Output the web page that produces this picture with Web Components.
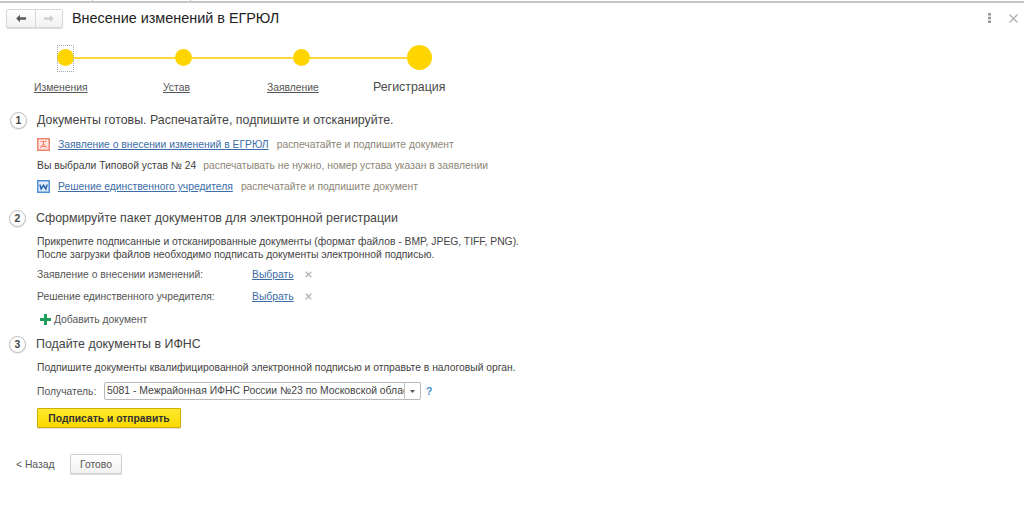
<!DOCTYPE html>
<html lang="ru">
<head>
<meta charset="utf-8">
<title>Внесение изменений в ЕГРЮЛ</title>
<style>
html,body{margin:0;padding:0;background:#fff}
body{width:1024px;height:512px;overflow:hidden;font:10.33px "Liberation Sans",Arial,sans-serif;color:#4b4b4b}
</style>
</head>
<body>
<egr-page>
    <egr-titlebar slot="top">Внесение изменений в ЕГРЮЛ</egr-titlebar>
    <egr-stepper></egr-stepper>

    <egr-section num="1" title="Документы готовы. Распечатайте, подпишите и отсканируйте." style="--tx:37px;--nx:10px;--gap:3px">
        <egr-doc-row icon="pdf" href="Заявление о внесении изменений в ЕГРЮЛ" note="распечатайте и подпишите документ"></egr-doc-row>
        <egr-doc-row text="Вы выбрали Типовой устав № 24" note="распечатывать не нужно, номер устава указан в заявлении"></egr-doc-row>
        <egr-doc-row icon="word" href="Решение единственного учредителя" note="распечатайте и подпишите документ"></egr-doc-row>
    </egr-section>

    <egr-section num="2" title="Сформируйте пакет документов для электронной регистрации" style="--tx:36px;--nx:9px;--top:10px">
        <egr-para style="--pt:6px;--pb:3px">Прикрепите подписанные и отсканированные документы (формат файлов - BMP, JPEG, TIFF, PNG).<br>После загрузки файлов необходимо подписать документы электронной подписью.</egr-para>
        <egr-file-row label="Заявление о внесении изменений:"></egr-file-row>
        <egr-file-row label="Решение единственного учредителя:"></egr-file-row>
        <egr-add-row>Добавить документ</egr-add-row>
    </egr-section>

    <egr-section num="3" title="Подайте документы в ИФНС" style="--tx:36px;--nx:9px;--top:2px">
        <egr-para style="--pt:6px;--pb:8px">Подпишите документы квалифицированной электронной подписью и отправьте в налоговый орган.</egr-para>
        <egr-recipient label="Получатель:" value="5081 - Межрайонная ИФНС России №23 по Московской облас"></egr-recipient>
        <egr-button kind="primary">Подписать и отправить</egr-button>
    </egr-section>

    <egr-footer></egr-footer>
</egr-page>

<script>
const define = (name, css, html) => {
    customElements.define(name, class extends HTMLElement {
        constructor() {
            super();
            const root = this.attachShadow({ mode: 'open' });
            root.innerHTML = `<style>${css}</style>` + (typeof html == 'function' ? html(this) : html);
        }
    });
};

// the top rule of the window, with the two tab separators that poke out of it
define('egr-page', `:host{display:block;width:1024px;height:512px;padding-top:2px;box-sizing:border-box;
    background:linear-gradient(#bbb,#bbb) 92px 0/1px 1px no-repeat,linear-gradient(#bbb,#bbb) 190px 0/1px 1px no-repeat,linear-gradient(#c6c6c6,#c6c6c6) 0 1px/100% 2px no-repeat}`,
    `<slot name="top"></slot><slot></slot>`);

define('egr-titlebar', `
    :host{display:flex;align-items:center;height:31px;padding:1px 0 0 6px;box-sizing:border-box}
    .nav{display:flex;width:57px;height:19px;box-sizing:border-box;border:1px solid #d6d6d6;border-radius:2px;background:linear-gradient(#fff,#f1f1f1);box-shadow:0 1px 1px #ddd}
    .nav div{flex:1;display:flex;align-items:center;justify-content:center}
    .nav div:first-child{border-right:1px solid #d6d6d6;flex:0 0 28px}
    .t{margin-left:9px;font-size:14.4px;color:#222;flex:1;white-space:nowrap}
    .more{display:flex;width:20px;justify-content:center;margin-right:10px}
    .close{display:flex;margin-right:6px}
`, `
    <div class="nav">
        <div><svg width="12" height="9" viewBox="0 0 12 9"><path d="M5 .8 1.200 4.500 5 8.200V5.800h6V3.200H5z" fill="#5a5a5a"/></svg></div>
        <div><svg width="12" height="9" viewBox="0 0 12 9"><path d="M7 .8l3.800 3.700L7 8.200V5.800H1V3.200h6z" fill="#cfcfcf"/></svg></div>
    </div>
    <span class="t"><slot></slot></span>
    <div class="more"><svg width="3" height="10" viewBox="0 0 3 10"><path d="M0 0h3v2.400H0zM0 3.800h3v2.400H0zM0 7.600h3V10H0z" fill="#999"/></svg></div>
    <div class="close"><svg width="9" height="9" viewBox="0 0 9 9"><path d="M.5.5l8 8M8.500.5l-8 8" stroke="#aaa" stroke-width="1.100" fill="none"/></svg></div>
`);

define('egr-stepper', `
    :host{display:block;height:76px}
    .track{display:flex;align-items:center;height:49px;padding-left:57px}
    .dot{flex:none;width:17px;height:17px;border-radius:50%;background:#ffd500;position:relative}
    .dot.big{width:25px;height:25px}
    .dot.first::after{content:"";position:absolute;left:0;top:-4px;width:15px;height:25px;border:1px dotted #aaa}
    .line{flex:none;width:101px;height:2px;background:#ffd83a}
    .line.w{width:97px}
    .labels{display:flex;margin-top:-5px;height:20px;align-items:center;padding-left:34px}
    .labels u{color:#555;white-space:nowrap}
    .labels u:nth-child(1){width:129px}
    .labels u:nth-child(2){width:104px}
    .labels u:nth-child(3){width:106px}
    .labels b{font-weight:400;font-size:12.400px;color:#4a4a4a;white-space:nowrap}
`, `
    <div class="track">
        <div class="dot first"></div><div class="line"></div>
        <div class="dot"></div><div class="line"></div>
        <div class="dot"></div><div class="line w"></div>
        <div class="dot big"></div>
    </div>
    <div class="labels"><u>Изменения</u><u>Устав</u><u>Заявление</u><b>Регистрация</b></div>
`);

define('egr-section', `
    :host{display:block;padding-top:var(--top,0)}
    .head{display:flex;align-items:center;height:22px;padding-left:var(--nx,10px);margin-bottom:var(--gap,0)}
    .num{flex:none;width:15px;height:15px;border:1px solid #bdbdbd;border-radius:50%;display:flex;align-items:center;justify-content:center;font-size:10.400px;font-weight:700;color:#444;background:#fff;box-shadow:0 1px 1px #e4e4e4}
    .title{font-size:12.400px;color:#444;margin-left:calc(var(--tx) - var(--nx) - 17px);white-space:nowrap}
    .body{display:block;padding-left:37px}
`, el => `
    <div class="head"><div class="num">${el.getAttribute('num')}</div><div class="title">${el.getAttribute('title')}</div></div>
    <div class="body"><slot></slot></div>
`);

const icons = {
    pdf: `<svg width="13" height="13" viewBox="0 0 13 13"><rect x=".75" y=".75" width="11.500" height="11.500" fill="#fde6e1" stroke="#f08471" stroke-width="1.500"/><path d="M3.500 3.500h6M6.500 3.500V6L3 10M6.500 6 10 10M4.500 8.500h4" fill="none" stroke="#f08471" stroke-width="1.100"/></svg>`,
    word: `<svg width="13" height="13" viewBox="0 0 13 13"><rect x=".75" y=".75" width="11.500" height="11.500" fill="#e3eefa" stroke="#4d8fd6" stroke-width="1.500"/><path d="M2.800 4.500l1.400 4.500 2.300-3.800L8.800 9l1.400-4.500" fill="none" stroke="#1f5fae" stroke-width="1.400"/></svg>`
};

define('egr-doc-row', `
    :host{display:flex;align-items:center;height:21px;white-space:nowrap}
    svg{flex:none;margin-right:8px}
    a{color:#3c6da8;text-decoration:underline;margin-right:8px}
    span{color:#3f3f3f;margin-right:7px}
    i{font-style:normal;color:#8d8575}
`, el => {
    const ic = el.getAttribute('icon'), href = el.getAttribute('href'), text = el.getAttribute('text');
    return (ic ? icons[ic] : '') + (href ? `<a>${href}</a>` : `<span>${text}</span>`) + `<i>${el.getAttribute('note')}</i>`;
});

define('egr-para', `:host{display:block;line-height:13px;color:#444;padding:var(--pt,7px) 0 var(--pb,2px);white-space:nowrap}`, `<slot></slot>`);

define('egr-file-row', `
    :host{display:flex;align-items:center;height:21.500px;white-space:nowrap}
    span{width:215px;color:#555}
    a{color:#3c6da8;text-decoration:underline;margin-right:11px}
`, el => `<span>${el.getAttribute('label')}</span><a>Выбрать</a><svg width="7" height="7" viewBox="0 0 7 7"><path d="M.7.7l5.600 5.600M6.300.7L.7 6.300" stroke="#b5b5b5" stroke-width="1.300"/></svg>`);

define('egr-add-row', `
    :host{display:flex;align-items:center;height:24px;padding-left:3px;color:#555;white-space:nowrap}
    svg{margin-right:3px}
`, `<svg width="11" height="11" viewBox="0 0 11 11"><path d="M4 0h3v4h4v3H7v4H4V7H0V4h4z" fill="#1e9e5a"/></svg><slot></slot>`);

define('egr-recipient', `
    :host{display:flex;align-items:center;height:18px;white-space:nowrap;margin-bottom:8px}
    .l{width:67px;color:#555}
    .f{display:flex;width:317px;height:18px;box-sizing:border-box;border:1px solid #b9b9b9;border-radius:2px;background:#fff}
    .v{flex:1;overflow:hidden;padding-left:2px;line-height:16px;color:#444;font-size:10.4px}
    .d{flex:none;width:15px;border-left:1px solid #c4c4c4;display:flex;align-items:center;justify-content:center}
    .q{margin-left:5px;color:#3f8fd2;font-weight:700}
`, el => `
    <span class="l">${el.getAttribute('label')}</span>
    <div class="f"><div class="v">${el.getAttribute('value')}</div><div class="d"><svg width="5" height="3" viewBox="0 0 5 3"><path d="M0 0h5L2.500 3z" fill="#555"/></svg></div></div>
    <span class="q">?</span>
`);

define('egr-button', `
    :host{display:inline-flex;align-items:center;justify-content:center;box-sizing:border-box;height:20px;white-space:nowrap;border-radius:1px}
    :host([kind=primary]){width:144px;border:1px solid #cfae00;background:linear-gradient(#ffe92e,#fbd800);font-weight:700;color:#333;box-shadow:0 1px 1px #ddd}
    :host([kind=plain]){width:52px;border:1px solid #cfcfcf;background:linear-gradient(#fff,#f2f2f2);color:#555;box-shadow:0 1px 1px #ddd}
`, `<slot></slot>`);

define('egr-footer', `
    :host{display:flex;align-items:center;height:20px;margin-top:26px;padding-left:16px;color:#555}
    span{width:54px}
`, `<span>&lt; Назад</span><egr-button kind="plain">Готово</egr-button>`);
</script>
</body>
</html>
